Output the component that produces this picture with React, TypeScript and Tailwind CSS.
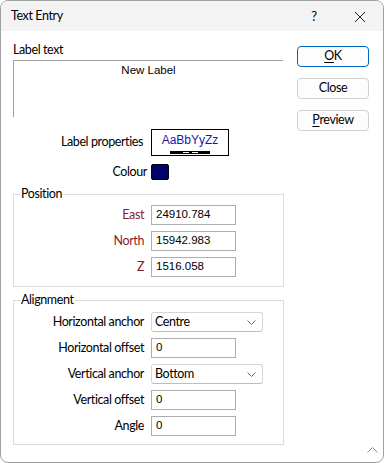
import React from "react";

const ui = { fontFamily: 'Lato, "Noto Sans", sans-serif' };
const classic = { fontFamily: '"Liberation Sans", Arial, sans-serif' };

function TextBox({ value }: { value: string }) {
  return (
    <div
      className="flex h-[20px] w-[85px] items-center border border-[#adadad] bg-white pl-[4px] text-[11.5px] tracking-normal text-black"
      style={classic}
    >
      {value}
    </div>
  );
}

function Combo({ value }: { value: string }) {
  return (
    <div className="flex h-[20px] w-[112px] items-center justify-between rounded-[3px] border border-[#d6d6d6] border-b-[#bdbdbd] bg-white pl-[3px] pr-[6px] text-[12.5px] text-black">
      <span>{value}</span>
      <svg width="9" height="5" viewBox="0 0 9 5">
        <polyline points="0.5,0.5 4.5,4.5 8.5,0.5" fill="none" stroke="#6a6a6a" strokeWidth="1" />
      </svg>
    </div>
  );
}

function Row({ label, red, children }: { label: string; red?: boolean; children: React.ReactNode }) {
  return (
    <div className="flex h-[20px] items-center">
      <div className={`w-[131px] pr-[1px] text-right text-[12.5px] ${red ? "text-[#861c2c]" : "text-black"}`}>{label}</div>
      <div className="ml-[6px]">{children}</div>
    </div>
  );
}

function Button({ children, primary }: { children: React.ReactNode; primary?: boolean }) {
  return (
    <button
      className={`flex h-[21px] w-[72px] items-center justify-center rounded-[4px] border bg-[#fdfdfd] text-[12.5px] text-black ${
        primary ? "border-[#0067c0]" : "border-[#d0d0d0]"
      }`}
    >
      {children}
    </button>
  );
}

export default function App() {
  return (
    <div className="h-[463px] w-[384px] bg-white tracking-[-0.4px]" style={ui}>
      <div className="flex h-[463px] w-[384px] flex-col overflow-hidden rounded-[8px] border border-[#a0a0a0] bg-white">
        <div className="flex h-[30px] shrink-0 items-center bg-[#f3f3f3] pl-[10px] pt-[1px] text-[12.5px] text-black">
          <span>Text Entry</span>
          <div className="ml-auto flex h-full">
            <div className="flex w-[46px] items-center justify-center text-[13px]">?</div>
            <div className="flex w-[46px] items-center justify-center">
              <svg width="12" height="12" viewBox="0 0 12 12">
                <path d="M1 1 L11 11 M11 1 L1 11" stroke="#222" strokeWidth="1" fill="none" />
              </svg>
            </div>
          </div>
        </div>

        <div className="relative flex flex-1">
          <div className="ml-[12px] w-[271px] pt-[11px]">
            <div className="h-[16px] text-[12.5px] leading-[16px] text-black">Label text</div>
            <div
              className="mt-[2px] h-[57px] w-[270px] border-l border-t border-[#a0a0a0] pt-[1px] text-center text-[11.5px] leading-[16px] tracking-normal text-black"
              style={classic}
            >
              New Label
            </div>

            <div className="mt-[12px] flex h-[27px] items-center">
              <div className="w-[130px] text-right text-[12.5px] text-black">Label properties</div>
              <div className="ml-[8px] flex h-[27px] w-[78px] flex-col items-center border border-black bg-white">
                <span className="mt-[3px] text-[12px] leading-[14px] tracking-normal text-[#1a1aa6]" style={classic}>
                  AaBbYyZz
                </span>
                <svg className="mt-[4px]" width="40" height="3" viewBox="0 0 40 3">
                  <rect x="0" y="0" width="40" height="3" fill="#000" />
                  <rect x="13" y="1" width="6" height="1" fill="#fff" />
                  <rect x="22" y="1" width="6" height="1" fill="#fff" />
                </svg>
              </div>
            </div>

            <div className="mt-[8px] flex h-[16px] items-center">
              <div className="w-[134px] text-right text-[12.5px] text-black">Colour</div>
              <div className="ml-[4px] h-[16px] w-[18px] rounded-[2px] border border-black bg-[#00006b]" />
            </div>

            <fieldset className="mt-[6px] w-[271px] border border-[#dcdcdc] pb-[9px]">
              <legend className="ml-[6px] px-[1px] text-[12.5px] leading-[16px] text-black">Position</legend>
              <div className="mt-[3px] flex flex-col gap-[6px]">
                <Row label="East" red>
                  <TextBox value="24910.784" />
                </Row>
                <Row label="North" red>
                  <TextBox value="15942.983" />
                </Row>
                <Row label="Z" red>
                  <TextBox value="1516.058" />
                </Row>
              </div>
            </fieldset>

            <fieldset className="mt-[5px] w-[271px] border border-[#dcdcdc] pb-[8px]">
              <legend className="ml-[6px] px-[1px] text-[12.5px] leading-[16px] text-black">Alignment</legend>
              <div className="mt-[4px] flex flex-col gap-[6px]">
                <Row label="Horizontal anchor">
                  <Combo value="Centre" />
                </Row>
                <Row label="Horizontal offset">
                  <TextBox value="0" />
                </Row>
                <Row label="Vertical anchor">
                  <Combo value="Bottom" />
                </Row>
                <Row label="Vertical offset">
                  <TextBox value="0" />
                </Row>
                <Row label="Angle">
                  <TextBox value="0" />
                </Row>
              </div>
            </fieldset>
          </div>

          <div className="ml-[13px] flex flex-col gap-[11px] pt-[15px]">
            <Button primary>
              <span className="underline underline-offset-2">O</span>K
            </Button>
            <Button>Close</Button>
            <Button>
              <span className="underline underline-offset-2">P</span>review
            </Button>
          </div>

          <svg className="absolute bottom-[9px] right-[5px]" width="11" height="6" viewBox="0 0 11 6">
            <polyline points="0.5,5.5 5.5,0.5 10.5,5.5" fill="none" stroke="#8a8a8a" strokeWidth="1" />
          </svg>
        </div>
      </div>
    </div>
  );
}
